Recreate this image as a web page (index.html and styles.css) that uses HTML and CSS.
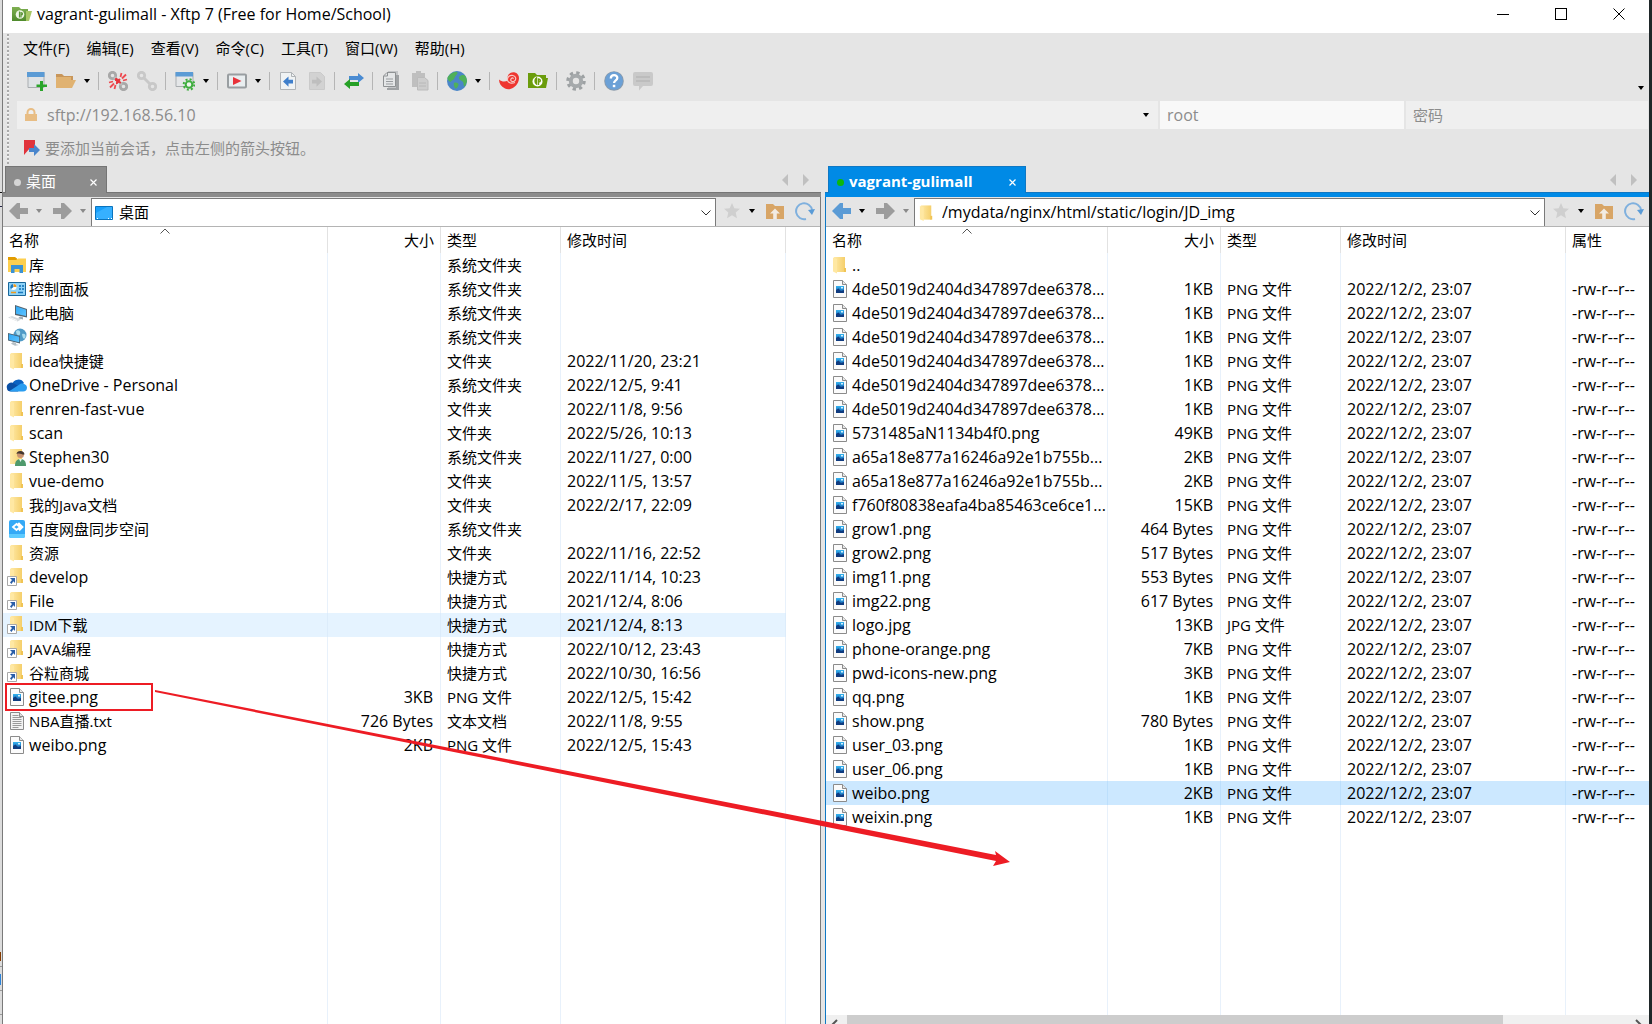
FILE: index.html
```html
<!DOCTYPE html>
<html lang="zh-CN">
<head>
<meta charset="utf-8">
<meta name="viewport" content="width=device-width, initial-scale=1">
<title>vagrant-gulimall - Xftp 7 (Free for Home/School)</title>
<link rel="stylesheet" href="styles.css">
</head>
<body>
<svg class="sprite" aria-hidden="true">
  <linearGradient id="g-folder" x1="0" x2="1"><stop offset="0" stop-color="#ffe9a6"/><stop offset="1" stop-color="#f5cf6b"/></linearGradient>
  <linearGradient id="g-sky" x1="0" y1="0" x2="0" y2="1"><stop offset="0" stop-color="#35b4f0"/><stop offset="1" stop-color="#1558a8"/></linearGradient>
  <linearGradient id="g-screen" x1="0" y1="0" x2="1" y2="1"><stop offset="0" stop-color="#2fa8f5"/><stop offset="1" stop-color="#5fc3ff"/></linearGradient>
  <linearGradient id="g-green" x1="0" y1="0" x2="0" y2="1"><stop offset="0" stop-color="#7fb052"/><stop offset="1" stop-color="#4f8a2c"/></linearGradient>

  <symbol id="i-folder" viewBox="0 0 19 18"><path d="M3 1h11v15H3z" fill="url(#g-folder)"/><path d="M2 1.500l4 1.500v14.500L2 15.500z" fill="#ffe8a3"/><path d="M13 12h2v4h-2z" fill="#f0c455"/></symbol>
  <symbol id="i-shortcut" viewBox="0 0 19 18"><path d="M3 0h11v15H3z" fill="url(#g-folder)"/><path d="M2 .5l4 1.500v12L2 13z" fill="#ffe8a3"/><path d="M13 11h2v4h-2z" fill="#f0c455"/><path d="M-.5 8.500h9v9h-9z" fill="#fff" stroke="#a8a8a8"/><path d="M2 10h5v5l-1.700-1.700L3.500 16 2 14.600 4 11.900z" fill="#2b5fa8"/></symbol>
  <symbol id="i-library" viewBox="0 0 19 18"><path d="M0 1h7l2 1.500v3H0z" fill="#e29c00"/><path d="M0 4h8l2-1.500h8V16H0z" fill="#fdcf4f"/><path d="M3 9h12v8h-3.500v-4h-5v4H3z" fill="#3c92d4"/></symbol>
  <symbol id="i-panel" viewBox="0 0 19 18"><path d="M.5 2.500h17v13H.5z" fill="#8fd3f8" stroke="#19679b"/><circle cx="5.500" cy="7" r="3" fill="#fff"/><path d="M5.500 7V4a3 3 0 0 1 3 3z" fill="#f09a1a"/><path d="M5.500 7l-2.500 2a3 3 0 0 1 2-5z" fill="#1c7ac0"/><path d="M11 5h2v2h-2zm3 0h2v2h-2zm-3 3h2v2h-2zm3 0h2v2h-2z" fill="#2b86c6"/><path d="M3 12.500h5" stroke="#f09a1a" stroke-width="1.500"/><path d="M10 12.500h5" stroke="#1c7ac0" stroke-width="1.500"/></symbol>
  <symbol id="i-pc" viewBox="0 0 19 18"><path d="M7 1l12 4v8.500l-12-2.500z" fill="#52636f"/><path d="M8 2.300l10 3.400v6.300l-10-2.200z" fill="url(#g-screen)"/><path d="M12 12.500l3 .8v2.200l-5-1.200z" fill="#9fabb3"/><path d="M0 13.500l4-1.500 9 3.500-3.500 2z" fill="#d5dade"/><path d="M2 13.700l7 2.800" stroke="#f8f8f8"/></symbol>
  <symbol id="i-net" viewBox="0 0 19 18"><circle cx="12" cy="7" r="6.500" fill="#4f9ac6"/><path d="M8 3c3-2 5 1 4 3-1 3-4 1-4-3zM14 6c3-1 4 1 3.500 3-1 3-3 2-3.500-3z" fill="#a9dcef"/><path d="M0 5l12 3v7.500L0 12.500z" fill="#4b6272"/><path d="M.8 6l10.400 2.700v5.600L.8 11.700z" fill="url(#g-screen)"/><path d="M5 14l3 .8v1.500l3 .7-4 .7-4-2z" fill="#b6c0c6"/></symbol>
  <symbol id="i-onedrive" viewBox="0 0 19 18"><path d="M4 8.500A6.500 6.500 0 0 1 16 7l-6 5z" fill="#0b63c2"/><path d="M-1 12.500A4.500 4.500 0 0 1 6 7.500l7 4-3 4H3c-2.500 0-4-1.300-4-3z" fill="#0a4fa5"/><path d="M1.500 15L13 7.500c3-.4 6 1.500 6 4.300 0 2.300-1.500 3.700-4 3.700H3z" fill="#2a9df0"/></symbol>
  <symbol id="i-user" viewBox="0 0 19 18"><path d="M2 1h12v15H2z" fill="url(#g-folder)"/><circle cx="12.500" cy="6.500" r="3.500" fill="#c99370"/><path d="M8.500 6c0-4 8-4.500 8 .5-3 .5-4-2-8-.5z" fill="#43362f"/><path d="M7 18c0-5 2-7 5.500-7s5.500 2 5.500 7z" fill="#4f9a6c"/><path d="M11 11h3l-1.500 3z" fill="#e9f3ee"/></symbol>
  <symbol id="i-baidu" viewBox="0 0 19 18"><rect x="1" width="16" height="18" rx="2" fill="#35a9f6"/><path d="M1 14h16v2a2 2 0 0 1-2 2H3a2 2 0 0 1-2-2z" fill="#5ecbff"/><path d="M5 7l3.500-3L12 7 8.500 10zM10 4.500l1-1L14.500 7 11 10.500" fill="none" stroke="#fff" stroke-width="1.800"/></symbol>
  <symbol id="i-image" viewBox="0 0 19 18"><path d="M2.500.5h9l4 4v13h-13z" fill="#fbfbfb" stroke="#8b8b8b"/><path d="M11.500.5v4h4" fill="#e8e8e8" stroke="#8b8b8b"/><path d="M5 6h8v7H5z" fill="url(#g-sky)"/><path d="M5 10l2.500-1.500L10 11l3-1v3H5z" fill="#103c80"/><path d="M10 7h2v1.500h-2z" fill="#d4f2ff"/></symbol>
  <symbol id="i-text" viewBox="0 0 19 18"><path d="M2.500.5h9l4 4v13h-13z" fill="#f3f3f3" stroke="#8b8b8b"/><path d="M11.500.5v4h4" fill="#ddd" stroke="#8b8b8b"/><path d="M4.500 3.500h6M4.500 5.500h9M4.500 7.500h9M4.500 9.500h9M4.500 11.500h9M4.500 13.500h9M4.500 15.500h6" stroke="#9a9a9a"/></symbol>
  <symbol id="i-desktop" viewBox="0 0 18 18"><path d="M.5 2.500h17v13H.5z" fill="#18a0fb" stroke="#0b74bd"/><path d="M1 15V9L12 3h5v12z" fill="#36b0ff"/><path d="M2 14.500h1m10 0h1m2 0h1" stroke="#fff"/></symbol>

  <symbol id="i-caret" viewBox="0 0 6 4"><path d="M0 0h6L3 4z" fill="currentColor"/></symbol>
  <symbol id="i-chevron" viewBox="0 0 10 6"><path d="M.5.5L5 5 9.500.5" fill="none" stroke="currentColor"/></symbol>
  <symbol id="i-arrow" viewBox="0 0 19 16"><path d="M0 8l8-8h3v5h8v6h-8v5H8z" fill="currentColor"/></symbol>
  <symbol id="i-x" viewBox="0 0 12 12"><path d="M.5.5l11 11M11.500.5l-11 11" stroke="currentColor" fill="none"/></symbol>
  <symbol id="i-xs" viewBox="0 0 7 7"><path d="M.5.5l6 6M6.500.5l-6 6" stroke="currentColor" stroke-width="1.200" fill="none"/></symbol>
  <symbol id="i-tri" viewBox="0 0 6 12"><path d="M6 0v12L0 6z" fill="currentColor"/></symbol>
  <symbol id="i-star" viewBox="0 0 18 18"><path d="M9 1l2.300 5.300 5.700.5-4.300 3.800 1.300 5.600L9 13.200l-5 3 1.300-5.600L1 6.800l5.700-.5z" fill="#cfcfcf"/></symbol>
  <symbol id="i-up" viewBox="0 0 18 18"><path d="M0 2h7l2 2h9v13H0z" fill="#d8a566"/><path d="M9 6.500l5 5h-3.200V17H7.200v-5.500H4z" fill="#f2ece4"/></symbol>
  <symbol id="i-refresh" viewBox="0 0 20 20"><path d="M11 18A8 8 0 1 1 17 9" fill="none" stroke="#7fb0de" stroke-width="2"/><path d="M13 9l7-1-3 6z" fill="#5a9bd6"/></symbol>

  <symbol id="t-new" viewBox="0 0 20 20"><path d="M1 1.500h16v15H1z" fill="#dfe3e6" stroke="#a9adb0"/><path d="M0 1h17.500v5H0z" fill="#5b9bd5"/><path d="M13 10h3v3.500h4v2.500h-4v4h-3v-4H9.500v-2.500H13z" fill="#2aa52a"/></symbol>
  <symbol id="t-open" viewBox="0 0 20 20"><path d="M0 3h6l2 2h9v5H0z" fill="#c8965a"/><path d="M0 17V6h15v3h5l-4 8z" fill="#e0b271"/></symbol>
  <symbol id="t-cut" viewBox="0 0 20 20"><g fill="none" stroke="#a8a8a8" stroke-width="2.800"><circle cx="4.500" cy="4.500" r="3.200"/><circle cx="15.500" cy="15.500" r="3.200"/></g><path d="M6 6l8 8" stroke="#bbb" stroke-width="2.500"/><path d="M12.500 6l1-4M14 7.500l4-4M15 9.500l4-1M5 10.500l-4 1M6 12.500l-4 4M7.500 14l-1 4" stroke="#ee4a50" stroke-width="1.800"/><path d="M8 7l2 1.500L12 8l-.5 2 1.500 2-2.500-.5-2 1.500.2-2.500L7 9z" fill="#e8323a" stroke="#e8323a"/></symbol>
  <symbol id="t-link" viewBox="0 0 20 20"><g fill="none" stroke="#c8c8c8" stroke-width="2.800"><circle cx="4.500" cy="4.500" r="3.200"/><circle cx="15.500" cy="15.500" r="3.200"/><path d="M6.500 6.500l7 7"/></g></symbol>
  <symbol id="t-props" viewBox="0 0 20 20"><path d="M1 1.500h17v14H1z" fill="#e4e6e8" stroke="#a9adb0"/><path d="M.5 1h17.500v4.500H.5z" fill="#5b9bd5"/><circle cx="14" cy="13.500" r="3.300" fill="#eef5ee" stroke="#3fae3f" stroke-width="2"/><circle cx="14" cy="13.500" r="5.300" fill="none" stroke="#3fae3f" stroke-width="2" stroke-dasharray="2 2.160"/></symbol>
  <symbol id="t-play" viewBox="0 0 20 20"><rect x="1" y="3.500" width="18" height="13" rx="1" fill="#e9eef0" stroke="#999ea1" stroke-width="2"/><path d="M6 6l8.500 4L6 14z" fill="#e8323a"/></symbol>
  <symbol id="t-docl" viewBox="0 0 20 20"><path d="M1.500 1.500h11l4 4v13h-15z" fill="#f0f3f4" stroke="#b0b4b7"/><path d="M12.500 1.500v4h4" fill="none" stroke="#b0b4b7"/><path d="M4 10.500l5.500-5v3.200H14v3.800H9.500v3.200z" fill="#3f7fcb"/></symbol>
  <symbol id="t-docr" viewBox="0 0 18 20"><path d="M1.500 1.500h11l4 4v13h-15z" fill="#d2d2d2" stroke="#cacaca"/><path d="M14 10.500l-5.500-5v3.200H4v3.800h4.500v3.200z" fill="#bebebe"/></symbol>
  <symbol id="t-swap" viewBox="0 0 20 20"><path d="M20 7l-6-5v3H5v4h9v3z" fill="#4a8bd2"/><path d="M0 13l6-5v3h9v4H6v3z" fill="#26a026"/></symbol>
  <symbol id="t-copy" viewBox="0 0 20 20"><path d="M6 0h10v17H6z" fill="#c4c6c8"/><path d="M14 4h3v15H5v-2h9z" fill="#9fa2a4"/><path d="M5 1.500h8.500v14h-12V5z" fill="#e4e6e7" stroke="#8f9294"/><path d="M5.500 1.500V5H2" fill="none" stroke="#8f9294"/><path d="M4 8h7M4 10.500h7M4 13h7" stroke="#9a9da0"/></symbol>
  <symbol id="t-paste" viewBox="0 0 18 20"><path d="M1 2h4V0h5v2h4v14H1z" fill="#bfbfbf"/><path d="M6.500 6.500h7l3.500 3V19H6.500z" fill="#cdcdcd" stroke="#bbb"/><path d="M8 12h7m-7 3h7" stroke="#b8b8b8"/></symbol>
  <symbol id="t-globe" viewBox="0 0 20 20"><circle cx="10" cy="10" r="10" fill="#4a86c8"/><path d="M3 3.500C6 1 10 0 10.500 1.500S8 5 7.500 7 5 9 4 10.500 1 9 .5 8 1 5 3 3.500zM12 6c2-2 4-2.500 6-1.500 1.500 2 2 4 2 6l-2 5c-2 0-1-3-2-4.500S11 9 12 6zM7 12c2-1 5 0 4.500 2S9 18 8.500 17.500 6 14 7 12z" fill="#4fb05a"/></symbol>
  <symbol id="t-shell" viewBox="0 0 20 20"><path d="M0 8.500c3 2.500 6 2.500 9 1-2-6 3-9 7-8 4 1 5 6 3 10-3 6-9 8-13 6C2 15.500 0 12.500 0 8.500z" fill="#ee3630"/><path d="M8.500 9.500C8 5.500 11 4 14 4.500c3 .5 3.500 4 1.500 5.500s-4.500 0-3.500-2 2.500-1 2 0M8.500 9.500c1 2.500 4 3.500 7.500 2" fill="none" stroke="#f7c9c4" stroke-width="1.200"/></symbol>
  <symbol id="t-ftp" viewBox="0 0 20 20"><path d="M0 2h7l2 2h9v3h2l-2 10H0z" fill="#6b9c0c"/><circle cx="9.500" cy="10.500" r="5" fill="#fff"/><path d="M8.500 7v6c-2-1-2-5 0-6zM10.500 14V8c2.500.5 2.500 3 0 3" fill="none" stroke="#6b9c0c" stroke-width="1.400"/></symbol>
  <symbol id="t-gear" viewBox="0 0 20 20"><circle cx="10" cy="10" r="8" fill="none" stroke="#9da1a3" stroke-width="3.500" stroke-dasharray="3.200 3.080"/><circle cx="10" cy="10" r="5.200" fill="none" stroke="#a5a9ab" stroke-width="4"/></symbol>
  <symbol id="t-help" viewBox="0 0 20 20"><circle cx="10" cy="10" r="9.800" fill="#8a9aaa"/><circle cx="10" cy="9.800" r="9" fill="#6ba0d6"/><path d="M6.800 7.500c0-4.500 6.600-4.300 6.500-.5 0 2.500-3.200 2.300-3.200 5" fill="none" stroke="#fff" stroke-width="2.300"/><path d="M8.800 13.800h2.500v2.400H8.800z" fill="#fff"/></symbol>
  <symbol id="t-chat" viewBox="0 0 20 20"><path d="M2 1h16a2 2 0 0 1 2 2v10a2 2 0 0 1-2 2h-8l-4 4.500V15H2a2 2 0 0 1-2-2V3a2 2 0 0 1 2-2z" fill="#c9c9c9"/><path d="M3 6h14M3 10h14" stroke="#b8b8b8" stroke-width="1.500"/></symbol>
  <symbol id="i-app" viewBox="0 0 20 16"><path d="M0 1h7l2 2h7v12H0z" fill="url(#g-green)"/><path d="M14 5h6l-3 10h-3z" fill="#a7c765"/><circle cx="8" cy="8.500" r="4.300" fill="#eef6e6"/><path d="M7.500 5.500v6M9 11.500v-5c2 0 2 2.500 0 2.500" fill="none" stroke="#5a9436" stroke-width="1.200"/></symbol>
  <symbol id="i-lock" viewBox="0 0 12 14"><path d="M0 6h12v7H0z" fill="#e8bd84"/><path d="M2.500 6V4.500a3.500 3.500 0 0 1 7 0V6" fill="none" stroke="#e8bd84" stroke-width="2"/></symbol>
  <symbol id="i-flag" viewBox="0 0 16 16"><path d="M0 0h11v10l-5-2-6 7z" fill="#e0343c"/><path d="M5 8h5V4l6 6-6 6v-4H5z" fill="#4a86cc"/></symbol>
</svg>

<div class="screen">
  <div class="backdrop" aria-hidden="true"></div>
  <div class="app">
    <header class="titlebar">
      <svg class="titlebar-icon" aria-hidden="true"><use href="#i-app"/></svg>
      <h1 class="titlebar-text">vagrant-gulimall - Xftp 7 (Free for Home/School)</h1>
      <button class="win-btn" aria-label="最小化"><span class="glyph-min"></span></button>
      <button class="win-btn" aria-label="最大化"><span class="glyph-max"></span></button>
      <button class="win-btn" aria-label="关闭"><svg width="12" height="12"><use href="#i-x"/></svg></button>
    </header>

    <div class="bars">
      <nav class="menu">
        <button>文件(F)</button><button>编辑(E)</button><button>查看(V)</button><button>命令(C)</button><button>工具(T)</button><button>窗口(W)</button><button>帮助(H)</button>
      </nav>
      <div class="toolbar" role="toolbar" aria-label="工具栏">
        <button class="tool" aria-label="新建"><svg><use href="#t-new"/></svg></button>
        <button class="tool" aria-label="打开"><svg><use href="#t-open"/></svg></button>
        <button class="caret" aria-label="打开选项"><svg><use href="#i-caret"/></svg></button>
        <span class="sep"></span>
        <button class="tool" aria-label="断开"><svg><use href="#t-cut"/></svg></button>
        <button class="tool" aria-label="重新连接"><svg><use href="#t-link"/></svg></button>
        <span class="sep"></span>
        <button class="tool" aria-label="属性"><svg><use href="#t-props"/></svg></button>
        <button class="caret" aria-label="属性选项"><svg><use href="#i-caret"/></svg></button>
        <span class="sep"></span>
        <button class="tool" aria-label="运行"><svg><use href="#t-play"/></svg></button>
        <button class="caret" aria-label="运行选项"><svg><use href="#i-caret"/></svg></button>
        <span class="sep"></span>
        <button class="tool" aria-label="传输到左侧"><svg><use href="#t-docl"/></svg></button>
        <button class="tool tool-narrow" aria-label="传输到右侧"><svg><use href="#t-docr"/></svg></button>
        <span class="sep"></span>
        <button class="tool" aria-label="同步"><svg><use href="#t-swap"/></svg></button>
        <span class="sep"></span>
        <button class="tool" aria-label="复制"><svg><use href="#t-copy"/></svg></button>
        <button class="tool tool-narrow" aria-label="粘贴"><svg><use href="#t-paste"/></svg></button>
        <span class="sep"></span>
        <button class="tool" aria-label="编码"><svg><use href="#t-globe"/></svg></button>
        <button class="caret" aria-label="编码选项"><svg><use href="#i-caret"/></svg></button>
        <span class="sep"></span>
        <button class="tool" aria-label="Xshell"><svg><use href="#t-shell"/></svg></button>
        <button class="tool" aria-label="Xftp"><svg><use href="#t-ftp"/></svg></button>
        <span class="sep"></span>
        <button class="tool" aria-label="选项"><svg><use href="#t-gear"/></svg></button>
        <span class="sep"></span>
        <button class="tool" aria-label="帮助"><svg><use href="#t-help"/></svg></button>
        <button class="tool" aria-label="反馈"><svg><use href="#t-chat"/></svg></button>
        <button class="caret caret-end" aria-label="更多"><svg><use href="#i-caret"/></svg></button>
      </div>
      <form class="session">
        <div class="field field-host">
          <svg class="lock" aria-hidden="true"><use href="#i-lock"/></svg>
          <input class="latin" aria-label="主机" value="sftp://192.168.56.10">
          <button type="button" class="caret" aria-label="历史记录"><svg><use href="#i-caret"/></svg></button>
        </div>
        <div class="field field-user"><input class="latin" aria-label="用户名" value="root"></div>
        <div class="field field-pass"><input type="password" aria-label="密码" placeholder="密码"></div>
      </form>
      <p class="hint"><svg aria-hidden="true"><use href="#i-flag"/></svg>要添加当前会话，点击左侧的箭头按钮。</p>
    </div>

    <main class="panes">
      <section class="pane pane-local">
        <div class="tabs">
          <div class="tab"><span class="dot"></span><span class="tab-name">桌面</span><button aria-label="关闭标签"><svg width="7" height="7"><use href="#i-xs"/></svg></button></div>
          <div class="tab-nav"><button aria-label="上一个"><svg><use href="#i-tri"/></svg></button><button class="flip" aria-label="下一个"><svg><use href="#i-tri"/></svg></button></div>
        </div>
        <div class="pane-body">
          <div class="pathbar">
            <button class="nav-arrow" aria-label="后退"><svg><use href="#i-arrow"/></svg></button>
            <button class="caret dim" aria-label="后退历史"><svg><use href="#i-caret"/></svg></button>
            <button class="nav-arrow flip" aria-label="前进"><svg><use href="#i-arrow"/></svg></button>
            <button class="caret dim" aria-label="前进历史"><svg><use href="#i-caret"/></svg></button>
            <div class="path">
              <svg class="path-icon" aria-hidden="true"><use href="#i-desktop"/></svg>
              <input aria-label="本地路径" value="桌面">
              <button class="chevron" aria-label="展开"><svg><use href="#i-chevron"/></svg></button>
            </div>
            <button class="mini" aria-label="收藏"><svg><use href="#i-star"/></svg></button>
            <button class="caret" aria-label="收藏列表"><svg><use href="#i-caret"/></svg></button>
            <button class="mini" aria-label="上一级"><svg><use href="#i-up"/></svg></button>
            <button class="mini mini-last" aria-label="刷新"><svg><use href="#i-refresh"/></svg></button>
          </div>
          <table class="files" id="local">
            <colgroup><col class="c-name"><col class="c-size"><col class="c-type"><col class="c-time"><col></colgroup>
            <thead><tr><th>名称<svg class="sort" aria-hidden="true"><use href="#i-chevron"/></svg></th><th class="num">大小</th><th>类型</th><th>修改时间</th><td></td></tr></thead>
            <tbody></tbody>
          </table>
        </div>
      </section>

      <section class="pane pane-remote">
        <div class="tabs">
          <div class="tab"><span class="dot"></span><span class="tab-name">vagrant-gulimall</span><button aria-label="关闭标签"><svg width="7" height="7"><use href="#i-xs"/></svg></button></div>
          <div class="tab-nav"><button aria-label="上一个"><svg><use href="#i-tri"/></svg></button><button class="flip" aria-label="下一个"><svg><use href="#i-tri"/></svg></button></div>
        </div>
        <div class="pane-body">
          <div class="pathbar">
            <button class="nav-arrow nav-on" aria-label="后退"><svg><use href="#i-arrow"/></svg></button>
            <button class="caret" aria-label="后退历史"><svg><use href="#i-caret"/></svg></button>
            <button class="nav-arrow flip" aria-label="前进"><svg><use href="#i-arrow"/></svg></button>
            <button class="caret dim" aria-label="前进历史"><svg><use href="#i-caret"/></svg></button>
            <div class="path">
              <svg class="path-icon" aria-hidden="true"><use href="#i-folder"/></svg>
              <input class="latin" aria-label="远程路径" value="/mydata/nginx/html/static/login/JD_img">
              <button class="chevron" aria-label="展开"><svg><use href="#i-chevron"/></svg></button>
            </div>
            <button class="mini" aria-label="收藏"><svg><use href="#i-star"/></svg></button>
            <button class="caret" aria-label="收藏列表"><svg><use href="#i-caret"/></svg></button>
            <button class="mini" aria-label="上一级"><svg><use href="#i-up"/></svg></button>
            <button class="mini mini-last" aria-label="刷新"><svg><use href="#i-refresh"/></svg></button>
          </div>
          <table class="files" id="remote">
            <colgroup><col class="c-name"><col class="c-size"><col class="c-type"><col class="c-time"><col></colgroup>
            <thead><tr><th>名称<svg class="sort" aria-hidden="true"><use href="#i-chevron"/></svg></th><th class="num">大小</th><th>类型</th><th>修改时间</th><th>属性</th></tr></thead>
            <tbody></tbody>
          </table>
          <div class="hscroll" aria-hidden="true"><svg viewBox="0 0 21 9"><path d="M11 5L6 10" /></svg><span class="thumb"></span><svg viewBox="0 0 21 9"><path d="M8 5l5 5" /></svg></div>
        </div>
      </section>
    </main>
  </div>
  <svg class="annotation" viewBox="0 0 1020 880" aria-hidden="true">
    <rect x="6" y="684" width="146" height="26" fill="none" stroke="#ed1c24" stroke-width="2"/>
    <path d="M155 690l841 165-1-4 15 11-17 4 3-5L155 692z" fill="#ed1c24"/>
  </svg>
</div>
<script src="script.js"></script>
</body>
</html>
```
FILE: styles.css
```css
* { box-sizing: border-box; }

body {
  margin: 0;
  font: 15px/24px "Open Sans", "Noto Sans CJK SC", sans-serif;
  color: #000;
}

button, input {
  margin: 0;
  padding: 0;
  border: 0;
  background: none;
  font: inherit;
  color: inherit;
}

button {
  display: flex;
  align-items: center;
  justify-content: center;
  flex: none;
}

input { flex: 1; min-width: 0; outline: 0; }
svg { display: block; flex: none; }
symbol { overflow: visible; }
.sprite { position: absolute; width: 0; height: 0; }
.latin { font-size: 16px; }
.flip { transform: scaleX(-1); }

.screen {
  position: relative;
  display: flex;
  height: 100vh;
  overflow: hidden;
  background: #1f2729;
  padding-right: 3px;
}

/* sliver of the window lying behind */
.backdrop {
  width: 2px;
  background:
    linear-gradient(#111, #111) 0 192px / 2px 1px no-repeat,
    linear-gradient(#224, #224) 0 206px / 2px 1px no-repeat,
    linear-gradient(#853b00, #853b00) 0 952px / 1px 9px no-repeat,
    linear-gradient(#2b82d9, #2b82d9) 0 974px / 1px 11px no-repeat,
    linear-gradient(#999, #999) 0 966px / 2px 1px no-repeat,
    linear-gradient(#999, #999) 0 990px / 2px 1px no-repeat,
    linear-gradient(#999, #999) 0 1014px / 2px 1px no-repeat,
    #dcdcdc;
}

.app {
  flex: 1;
  min-width: 0;
  display: flex;
  flex-direction: column;
  border-left: 1px solid #7a7a7a;
  background: #e5e5e5;
}

/* title bar */
.titlebar {
  display: flex;
  align-items: center;
  height: 33px;
  padding: 0 1px 5px 9px;
  background: #fff;
}
.titlebar-icon { width: 20px; height: 16px; }
.titlebar-text { flex: 1; margin: 0 0 0 5px; font-size: 16px; font-weight: 400; }
.win-btn { width: 58px; height: 28px; }
.glyph-min { width: 12px; height: 1px; background: #000; }
.glyph-max { width: 12px; height: 12px; border: 1px solid #000; }

/* menu, tools, session */
.bars {
  position: relative;
  height: 133px;
}
.bars::before {
  content: "";
  position: absolute;
  top: 1px;
  bottom: 2px;
  left: 4px;
  width: 2px;
  background: repeating-linear-gradient(#aaa 0 2px, #f4f4f4 2px 3px, transparent 3px 4px);
}
.menu { display: flex; gap: 17px; height: 32px; padding: 0 0 2px 20px; }

.toolbar {
  display: flex;
  align-items: center;
  gap: 8px;
  height: 32px;
  padding: 0 5px 0 24px;
}
.tool, .tool svg { width: 20px; height: 20px; }
.tool-narrow, .tool-narrow svg { width: 18px; }
.tool + .tool, .sep + .tool { margin-left: 1px; }
.sep { width: 1px; height: 18px; background: #b5b5b5; }
.caret, .caret svg { width: 6px; height: 4px; }
.caret-end { margin-left: auto; transform: translateY(7px); }
.dim { color: #8a8a8a; }

.session {
  display: grid;
  grid-template-columns: 1141fr 244fr 242fr;
  gap: 2px;
  height: 28px;
  margin: 4px 1px 0 14px;
}
.field { display: flex; align-items: center; min-width: 0; background: #efefef; color: #8c8c8c; padding: 0 7px; }
.field-host { padding: 0 9px 0 8px; }
.field-host .caret { color: #000; }
.field-user { background: #f8f8f8; }
.field ::placeholder { color: #8c8c8c; opacity: 1; }
.lock { width: 12px; height: 14px; margin-right: 10px; }

.hint {
  display: flex;
  align-items: center;
  gap: 5px;
  height: 37px;
  margin: 0;
  padding-left: 21px;
  color: #8c8c8c;
}
.hint svg { width: 16px; height: 16px; }

/* panes */
.panes {
  flex: 1;
  min-height: 0;
  display: grid;
  grid-template-columns: 818fr 824fr;
  gap: 4px;
}
.pane { display: flex; flex-direction: column; min-width: 0; min-height: 0; }
.pane-local { --line: #8c8c8c; --edge: #757575; }
.pane-remote { --line: #008ae6; --edge: #0f78c4; }

.tabs {
  display: flex;
  justify-content: space-between;
  align-items: center;
  height: 31px;
  border-bottom: 4px solid var(--line);
  box-shadow: inset 0 -1px var(--edge);
}
.tab {
  display: flex;
  align-items: center;
  height: 27px;
  padding: 2px 9px 0 8px;
  background: var(--line);
  border: 1px solid var(--edge);
  border-bottom: 0;
  color: #fff;
}
.pane-local .tab { width: 102px; margin-left: 2px; }
.pane-remote .tab { width: 198px; margin-left: 3px; font-weight: 700; }
.dot { width: 7px; height: 7px; margin-top: 2px; border-radius: 50%; background: #d5d5d5; }
.pane-remote .dot { background: #0cb80c; }
.tab-name { flex: 1; margin-left: 5px; white-space: nowrap; }
.tab button { margin-top: 2px; }
.tab-nav { display: flex; gap: 15px; padding-right: 12px; color: #c0c0c0; }
.tab-nav svg { width: 6px; height: 12px; }

.pane-body { flex: 1; min-height: 0; display: flex; flex-direction: column; background: #fff; }
.pane-local .pane-body { border-right: 1px solid #7a7a7a; }
.pane-remote .pane-body { border-left: 1px solid #0f78c4; }

.pathbar {
  display: flex;
  align-items: center;
  gap: 8px;
  height: 30px;
  padding: 0 5px 1px 6px;
  background: #e5e5e5;
  border-bottom: 1px solid #b4b4b4;
}
.nav-arrow { color: #9c9c9c; }
.nav-arrow, .nav-arrow svg { width: 19px; height: 16px; }
.nav-on { color: #5b9bd5; }
.caret + .nav-arrow { margin-left: 3px; }
.path {
  flex: 1;
  min-width: 0;
  align-self: stretch;
  display: flex;
  align-items: center;
  padding: 0 4px 0 3px;
  background: #fff;
  border: 1px solid #7a7a7a;
  border-bottom: 0;
  margin: 1px -1px -1px -3px;
}
.path input { padding-bottom: 1px; }
.path-icon { width: 18px; height: 18px; margin-right: 6px; }
.chevron, .chevron svg { width: 10px; height: 6px; }
.chevron { color: #333; }
.mini, .mini svg { width: 18px; height: 18px; }
.caret + .mini { margin-left: 3px; }
.mini-last, .mini-last svg { width: 20px; height: 20px; }
.mini-last { margin-left: 3px; }

/* file lists */
.files {
  flex: 1;
  width: 100%;
  height: 100%;
  min-height: 0;
  display: table;
  table-layout: fixed;
  border-collapse: separate;
  border-spacing: 0;
}
.pane-local .c-name { width: 325px; }
.pane-remote .c-name { width: 282px; }
.c-size { width: 113px; }
.c-type { width: 120px; }
.c-time { width: 225px; }

.files th, .files td {
  height: 24px;
  padding: 0 6px;
  border-right: 1px solid #e8f1fb;
  font-weight: 400;
  text-align: left;
  white-space: nowrap;
  overflow: hidden;
}
.files thead th, .files thead td { position: relative; height: 26px; border-color: #e2e2e2; }
.files tr > :last-child { border-right: 0; }
.files td.num { text-align: right; padding-right: 7px; }
.files th.num { text-align: right; }
.files td.latin { line-height: 22px; }
.sort { position: absolute; top: 1px; left: calc(50% - 5px); width: 10px; height: 6px; color: #555; transform: scaleY(-1); }

.files td.name { padding-left: 5px; }
.name-cell { display: flex; align-items: center; }
.name-cell svg { width: 19px; height: 18px; margin-right: 2px; overflow: visible; }
.filler td { height: auto; }
.hover td:not(:last-child) { background: #e5f3ff; border-color: #dcecfb; }
.selected td { background: #cce8ff; border-color: #bcdffc; }

.hscroll { display: flex; height: 9px; flex: none; background: #f0f0f0; }
.hscroll svg { width: 21px; height: 9px; fill: none; stroke: #555; stroke-width: 2; }
.hscroll .thumb { flex: 0 1 656px; background: #cdcdcd; margin-right: auto; }

.annotation { position: absolute; top: 0; left: 0; width: 1020px; height: 880px; pointer-events: none; }
```
FILE: script.js
```js
// Each entry: icon, name, size, type, modified, optional state
const SYS = "系统文件夹", DIR = "文件夹", LNK = "快捷方式", PNG = "PNG 文件";
const local = [
  ["library", "库", "", SYS, ""],
  ["panel", "控制面板", "", SYS, ""],
  ["pc", "此电脑", "", SYS, ""],
  ["net", "网络", "", SYS, ""],
  ["folder", "idea快捷键", "", DIR, "2022/11/20, 23:21"],
  ["onedrive", "OneDrive - Personal", "", SYS, "2022/12/5, 9:41"],
  ["folder", "renren-fast-vue", "", DIR, "2022/11/8, 9:56"],
  ["folder", "scan", "", DIR, "2022/5/26, 10:13"],
  ["user", "Stephen30", "", SYS, "2022/11/27, 0:00"],
  ["folder", "vue-demo", "", DIR, "2022/11/5, 13:57"],
  ["folder", "我的Java文档", "", DIR, "2022/2/17, 22:09"],
  ["baidu", "百度网盘同步空间", "", SYS, ""],
  ["folder", "资源", "", DIR, "2022/11/16, 22:52"],
  ["shortcut", "develop", "", LNK, "2022/11/14, 10:23"],
  ["shortcut", "File", "", LNK, "2021/12/4, 8:06"],
  ["shortcut", "IDM下载", "", LNK, "2021/12/4, 8:13", "hover"],
  ["shortcut", "JAVA编程", "", LNK, "2022/10/12, 23:43"],
  ["shortcut", "谷粒商城", "", LNK, "2022/10/30, 16:56"],
  ["image", "gitee.png", "3KB", PNG, "2022/12/5, 15:42"],
  ["text", "NBA直播.txt", "726 Bytes", "文本文档", "2022/11/8, 9:55"],
  ["image", "weibo.png", "2KB", PNG, "2022/12/5, 15:43"]
];

const LONG = "4de5019d2404d347897dee6378...";
const remote = [["folder", "..", "", "", ""]].concat([
  [LONG, "1KB"], [LONG, "1KB"], [LONG, "1KB"], [LONG, "1KB"], [LONG, "1KB"], [LONG, "1KB"],
  ["5731485aN1134b4f0.png", "49KB"],
  ["a65a18e877a16246a92e1b755b...", "2KB"],
  ["a65a18e877a16246a92e1b755b...", "2KB"],
  ["f760f80838eafa4ba85463ce6ce1...", "15KB"],
  ["grow1.png", "464 Bytes"],
  ["grow2.png", "517 Bytes"],
  ["img11.png", "553 Bytes"],
  ["img22.png", "617 Bytes"],
  ["logo.jpg", "13KB"],
  ["phone-orange.png", "7KB"],
  ["pwd-icons-new.png", "3KB"],
  ["qq.png", "1KB"],
  ["show.png", "780 Bytes"],
  ["user_03.png", "1KB"],
  ["user_06.png", "1KB"],
  ["weibo.png", "2KB", "selected"],
  ["weixin.png", "1KB"]
].map(([name, size, state]) =>
  ["image", name, size, name.endsWith(".jpg") ? "JPG 文件" : PNG, "2022/12/2, 23:07", state]));

function fill(id, rows, mode) {
  const html = rows.map(([icon, name, size, type, time, state]) => `
    <tr class="${state || ""}">
      <td class="name"><div class="name-cell"><svg aria-hidden="true"><use href="#i-${icon}"/></svg><span class="${/[\u4e00-\u9fff]/.test(name) ? "" : "latin"}">${name}</span></div></td>
      <td class="num latin">${size}</td><td>${type}</td><td class="latin">${time}</td><td class="latin">${time ? mode : ""}</td>
    </tr>`).join("");
  document.querySelector(`#${id} tbody`).innerHTML =
    html + '<tr class="filler"><td></td><td></td><td></td><td></td><td></td></tr>';
}

fill("local", local, "");
fill("remote", remote, "-rw-r--r--");
```
